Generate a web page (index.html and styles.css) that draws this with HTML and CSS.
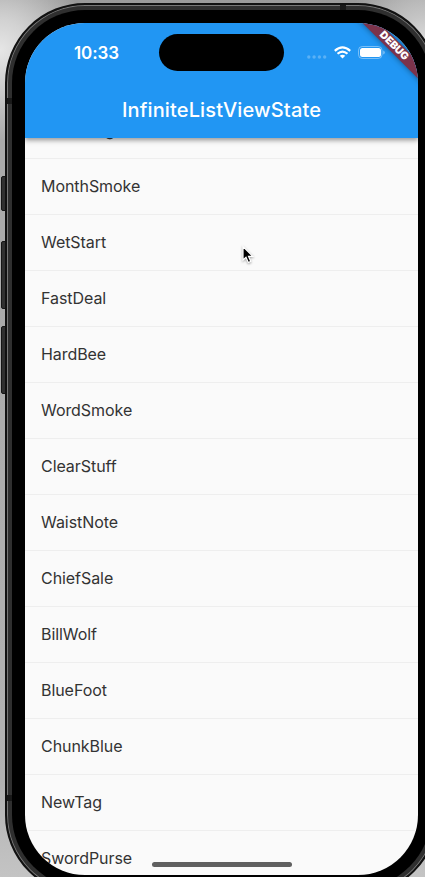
FILE: index.html
```html
<!DOCTYPE html>
<html lang="en">
<head>
<meta charset="utf-8">
<title>InfiniteListViewState</title>
<link rel="stylesheet" href="styles.css">
</head>
<body>
<div class="desk">
  <div class="device">
    <i class="button mute"></i><i class="button volume-up"></i><i class="button volume-down"></i>
    <div class="rim">
      <i class="band band-left"></i><i class="band band-top"></i><i class="band band-low"></i>
      <div class="bezel">
        <main class="screen">
          <header class="appbar">
            <div class="status">
              <span class="time">10:33</span>
              <span class="island"></span>
              <div class="indicators">
                <svg class="dots" width="20" height="4" viewBox="0 0 20 4"><g fill="#fff" fill-opacity=".26"><circle cx="1.8" cy="2" r="1.7"/><circle cx="7.1" cy="2" r="1.7"/><circle cx="12.4" cy="2" r="1.7"/><circle cx="17.7" cy="2" r="1.7"/></g></svg>
                <svg class="wifi" width="17" height="13" viewBox="0 0 17 13"><g fill="none" stroke="#fff" stroke-width="2.200"><path d="M.8 4.900Q8.500-2 16.200 4.900"/><path d="M3.500 7.800Q8.500 3.300 13.500 7.800"/></g><path d="M8.500 12.500L5.700 9.800Q8.500 7.500 11.300 9.800Z" fill="#fff"/></svg>
                <svg class="battery" width="27" height="13" viewBox="0 0 27 13"><rect x=".5" y=".5" width="23.500" height="12" rx="3.800" fill="none" stroke="#fff" stroke-opacity=".4"/><rect x="2" y="2" width="21" height="9" rx="2.500" fill="#fff"/><path d="M25.300 4.500v4q1.400-.7 1.400-2t-1.400-2" fill="#fff" fill-opacity=".5"/></svg>
              </div>
            </div>
            <h1 class="title">InfiniteListViewState</h1>
          </header>
          <ul class="list">
            <li>WordKing</li>
            <li>MonthSmoke</li>
            <li>WetStart</li>
            <li>FastDeal</li>
            <li>HardBee</li>
            <li>WordSmoke</li>
            <li>ClearStuff</li>
            <li>WaistNote</li>
            <li>ChiefSale</li>
            <li>BillWolf</li>
            <li>BlueFoot</li>
            <li>ChunkBlue</li>
            <li>NewTag</li>
            <li>SwordPurse</li>
          </ul>
          <div class="debug">DEBUG</div>
          <div class="home"></div>
        </main>
      </div>
    </div>
  </div>
  <svg class="cursor" width="14" height="20" viewBox="0 0 14 20"><path d="M2 1.500V15l3-2.800L7.300 17.500l2.500-1.100L7.500 11.300H11.800Z" fill="#000" stroke="#fff" stroke-width="1.200"/></svg>
</div>
</body>
</html>
```

FILE: styles.css
```css
* { box-sizing: border-box; }

body {
  margin: 0;
  overflow: hidden;
  font-family: Inter, "Liberation Sans", sans-serif;
}

.desk {
  position: relative;
  width: 425px;
  height: 877px;
  overflow: hidden;
  background:
    radial-gradient(circle at 0 50px, #e6e6e6 0, #d2d2d2 30px, transparent 90px),
    radial-gradient(circle at 425px 40px, #dadada 0, #c4c4c4 25px, transparent 80px),
    linear-gradient(180deg, #999 0, #aaa 60px, #aaa 300px, #b2b2b2 780px, #c4c4c4 877px);
}

.device {
  position: relative;
  width: 433px;
  height: 892px;
  margin: 3px 0 0 5px;
}

.rim {
  position: relative;
  height: 100%;
  padding: 5px;
  border: 2px solid #111;
  border-radius: 80px;
  background: #2f2f2f;
  box-shadow: inset 0 0 0 1px #777;
}

.bezel {
  position: relative;
  height: 100%;
  padding: 13px;
  border-radius: 73px;
  background: #000;
}

.button {
  position: absolute;
  left: -4px;
  width: 6px;
  border: 1px solid #151515;
  border-radius: 2px 0 0 2px;
  background: #303030;
}
.mute { top: 173px; height: 35px; }
.volume-up { top: 238px; height: 68px; }
.volume-down { top: 323px; height: 68px; }

.band { position: absolute; background: #191919; }
.band-left { left: 0; top: 93px; width: 6px; height: 6px; }
.band-low { left: 0; top: 790px; width: 6px; height: 6px; }
.band-top { left: 333px; top: 0; width: 6px; height: 6px; }

.screen {
  position: relative;
  height: 100%;
  overflow: hidden;
  border-radius: 60px;
  background: #fafafa;
}

.appbar {
  position: relative;
  z-index: 1;
  height: 115px;
  background: #2196f3;
  box-shadow: 0 2px 4px rgba(0, 0, 0, .3), 0 4px 5px rgba(0, 0, 0, .1);
  color: #fff;
}

.status {
  display: grid;
  grid-template-columns: 134px 125px 1fr;
  align-items: center;
  height: 59px;
}
.time {
  padding-left: 49px;
  font-size: 17px;
  font-weight: 600;
  letter-spacing: -.1px;
}
.island {
  height: 37px;
  border-radius: 19px;
  background: #000;
}
.indicators {
  display: flex;
  align-items: center;
  padding-left: 23px;
}
.indicators svg { flex: none; }
.dots { margin-top: 9px; }
.wifi { margin-left: 7px; }
.battery { margin-left: 7px; }

.title {
  margin: 0;
  font-size: 20px;
  font-weight: 500;
  letter-spacing: .14px;
  line-height: 56px;
  text-align: center;
}

.list {
  margin: -35px 0 0;
  padding: 0;
  list-style: none;
}
.list li {
  height: 56px;
  padding-left: 16px;
  border-bottom: 1px solid #eee;
  color: #333;
  font-size: 16px;
  letter-spacing: -.06px;
  line-height: 55px;
}

.debug {
  position: absolute;
  z-index: 2;
  top: 17px;
  right: -31px;
  width: 110px;
  height: 12px;
  transform: rotate(45deg);
  background: #7c334b;
  box-shadow: 0 0 6px rgba(0, 0, 0, .45);
  color: #fff;
  font-size: 10.4px;
  font-weight: 900;
  line-height: 12px;
  text-align: center;
}

.home {
  position: absolute;
  left: 127px;
  bottom: 8px;
  width: 140px;
  height: 5px;
  border-radius: 3px;
  background: #606060;
}

.cursor {
  position: absolute;
  left: 241px;
  top: 245px;
  filter: drop-shadow(0 1px 1px rgba(0, 0, 0, .35));
}
```
